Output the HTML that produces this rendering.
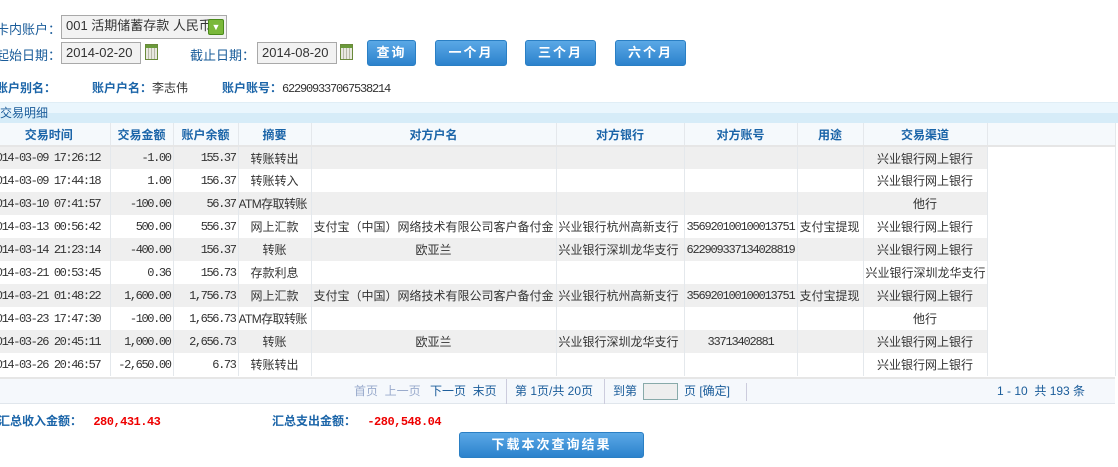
<!DOCTYPE html>
<html><head><meta charset="utf-8"><style>
*{margin:0;padding:0;box-sizing:border-box}
body{width:1118px;height:467px;background:#fff;font-family:"Liberation Sans","Noto Sans CJK SC",sans-serif;font-size:12px;color:#333;position:relative;overflow:hidden}
.a{position:absolute;white-space:nowrap}
.lbl{color:#1a5c9a}
.b{font-weight:bold;color:#1a64a8}
.inp{position:absolute;border:1px solid #a9a9a9;background:#f2f2f2;height:22px;line-height:20px;padding-left:4px;font-size:13px;color:#333}
.btn{position:absolute;height:26px;border:1px solid #2a7fc4;border-radius:3px;background:linear-gradient(#5aa8e6,#2c82cc);color:#fff;font-weight:bold;font-size:13px;text-align:center;line-height:24px;letter-spacing:2px}
.cal{position:absolute;width:13px;height:16px;border:1px solid #6a8a3a;background:repeating-linear-gradient(90deg,#e8e8e0 0 2px,#b8b8a8 2px 3px);}
.cal:before{content:"";position:absolute;left:0;right:0;top:0;height:3px;background:#6a9a3a}
table{position:absolute;left:-12px;top:123px;border-collapse:collapse;font-size:12px;table-layout:fixed;width:1127px}
td,th{height:23px;border-right:1px solid #e4e8ec;white-space:nowrap;padding:0 2px;overflow:hidden}
th{color:#1a64a8;background:#f5f9fc;font-weight:bold;border-bottom:2px solid #e6e6e6}
tr.g td{background:#efefef}
tr.w td{background:#fff}
.m{font-family:"Liberation Mono","Noto Sans CJK SC",monospace;font-size:12px;letter-spacing:-1.4px}
.ac{letter-spacing:-1.2px}
.r{text-align:right}.c{text-align:center}
.atm{letter-spacing:-0.6px;padding:0}
</style></head><body>
<div class="a lbl" style="left:-4px;top:19px;font-size:13px">卡内账户：</div>
<div class="inp" style="left:61px;top:15px;width:166px;height:24px">001 活期储蓄存款 人民币</div>
<div class="a" style="left:208px;top:19px;width:16px;height:16px;background:#7ab83a;border:1px solid #4a8a1a;border-radius:2px;color:#fff;font-size:9px;text-align:center;line-height:14px">▼</div>
<div class="a lbl" style="left:-4px;top:45px;font-size:13px">起始日期：</div>
<div class="inp" style="left:61px;top:42px;width:80px">2014-02-20</div>
<div class="cal" style="left:145px;top:44px"></div>
<div class="a lbl" style="left:190px;top:45px;font-size:13px">截止日期：</div>
<div class="inp" style="left:257px;top:42px;width:80px">2014-08-20</div>
<div class="cal" style="left:340px;top:44px"></div>
<div class="btn" style="left:367px;top:40px;width:49px">查询</div>
<div class="btn" style="left:435px;top:40px;width:72px">一个月</div>
<div class="btn" style="left:525px;top:40px;width:71px">三个月</div>
<div class="btn" style="left:615px;top:40px;width:71px">六个月</div>
<div class="a b" style="left:-4px;top:79px;font-size:12px">账户别名：</div>
<div class="a" style="left:92px;top:79px;font-size:12px"><span class="b">账户户名：</span>李志伟</div>
<div class="a" style="left:222px;top:79px;font-size:12px"><span class="b">账户账号：</span><span class="m ac">622909337067538214</span></div>
<div class="a" style="left:0;top:102px;width:1118px;height:21px;background:linear-gradient(#eaf6fd 0 50%,#d6ecf8 50%);border-top:1px solid #e0eef6;color:#1a5c9a;font-size:12px;line-height:21px">交易明细</div>
<table>
<colgroup><col style="width:122px"><col style="width:63px"><col style="width:65px"><col style="width:73px"><col style="width:245px"><col style="width:128px"><col style="width:113px"><col style="width:66px"><col style="width:124px"><col style="width:128px"></colgroup>
<tr><th>交易时间</th><th>交易金额</th><th>账户余额</th><th>摘要</th><th>对方户名</th><th>对方银行</th><th>对方账号</th><th>用途</th><th>交易渠道</th><th></th></tr>
<tr class="g"><td class="m">2014-03-09 17:26:12</td><td class="m r">-1.00</td><td class="m r">155.37</td><td class="c">转账转出</td><td></td><td></td><td></td><td></td><td class="c">兴业银行网上银行</td><td style="background:#fff"></td></tr>
<tr class="w"><td class="m">2014-03-09 17:44:18</td><td class="m r">1.00</td><td class="m r">156.37</td><td class="c">转账转入</td><td></td><td></td><td></td><td></td><td class="c">兴业银行网上银行</td><td></td></tr>
<tr class="g"><td class="m">2014-03-10 07:41:57</td><td class="m r">-100.00</td><td class="m r">56.37</td><td class="atm">ATM存取转账</td><td></td><td></td><td></td><td></td><td class="c">他行</td><td style="background:#fff"></td></tr>
<tr class="w"><td class="m">2014-03-13 00:56:42</td><td class="m r">500.00</td><td class="m r">556.37</td><td class="c">网上汇款</td><td>支付宝（中国）网络技术有限公司客户备付金</td><td>兴业银行杭州高新支行</td><td class="m ac">356920100100013751</td><td>支付宝提现</td><td class="c">兴业银行网上银行</td><td></td></tr>
<tr class="g"><td class="m">2014-03-14 21:23:14</td><td class="m r">-400.00</td><td class="m r">156.37</td><td class="c">转账</td><td class="c">欧亚兰</td><td>兴业银行深圳龙华支行</td><td class="m ac">622909337134028819</td><td></td><td class="c">兴业银行网上银行</td><td style="background:#fff"></td></tr>
<tr class="w"><td class="m">2014-03-21 00:53:45</td><td class="m r">0.36</td><td class="m r">156.73</td><td class="c">存款利息</td><td></td><td></td><td></td><td></td><td class="c">兴业银行深圳龙华支行</td><td></td></tr>
<tr class="g"><td class="m">2014-03-21 01:48:22</td><td class="m r">1,600.00</td><td class="m r">1,756.73</td><td class="c">网上汇款</td><td>支付宝（中国）网络技术有限公司客户备付金</td><td>兴业银行杭州高新支行</td><td class="m ac">356920100100013751</td><td>支付宝提现</td><td class="c">兴业银行网上银行</td><td style="background:#fff"></td></tr>
<tr class="w"><td class="m">2014-03-23 17:47:30</td><td class="m r">-100.00</td><td class="m r">1,656.73</td><td class="atm">ATM存取转账</td><td></td><td></td><td></td><td></td><td class="c">他行</td><td></td></tr>
<tr class="g"><td class="m">2014-03-26 20:45:11</td><td class="m r">1,000.00</td><td class="m r">2,656.73</td><td class="c">转账</td><td class="c">欧亚兰</td><td>兴业银行深圳龙华支行</td><td class="m c ac">33713402881</td><td></td><td class="c">兴业银行网上银行</td><td style="background:#fff"></td></tr>
<tr class="w"><td class="m">2014-03-26 20:46:57</td><td class="m r">-2,650.00</td><td class="m r">6.73</td><td class="c">转账转出</td><td></td><td></td><td></td><td></td><td class="c">兴业银行网上银行</td><td></td></tr>
</table>
<div class="a" style="left:0;top:377px;width:1115px;height:27px;background:#f5f8fc;border-top:2px solid #e6e6e6;border-bottom:1px solid #e0e6ec;color:#1a5c9a;line-height:25px">
<span class="a" style="left:354px;color:#9ac"> 首页 &nbsp;上一页</span>
<span class="a" style="left:430px">下一页 &nbsp;末页</span>
<span class="a" style="left:506px;border-left:1px solid #ccd;padding-left:8px">第 1页/共 20页</span>
<span class="a" style="left:604px;border-left:1px solid #ccd;padding-left:8px">到第</span>
<span class="a" style="left:643px;top:4px;width:35px;height:17px;border:1px solid #8aa;background:#eee"></span>
<span class="a" style="left:684px">页 [确定]</span>
<span class="a" style="left:746px;border-left:1px solid #ccd;height:18px;top:4px"></span>
<span class="a" style="left:997px">1 - 10 &nbsp;共 193 条</span></div>
<div class="a b" style="left:-2px;top:412px">汇总收入金额： <span class="m" style="color:#e00;margin-left:8px;letter-spacing:-0.5px">280,431.43</span></div>
<div class="a b" style="left:272px;top:412px">汇总支出金额： <span class="m" style="color:#e00;margin-left:8px;letter-spacing:-0.5px">-280,548.04</span></div>
<div class="btn" style="left:459px;top:432px;width:185px;height:26px">下载本次查询结果</div>
</body></html>
